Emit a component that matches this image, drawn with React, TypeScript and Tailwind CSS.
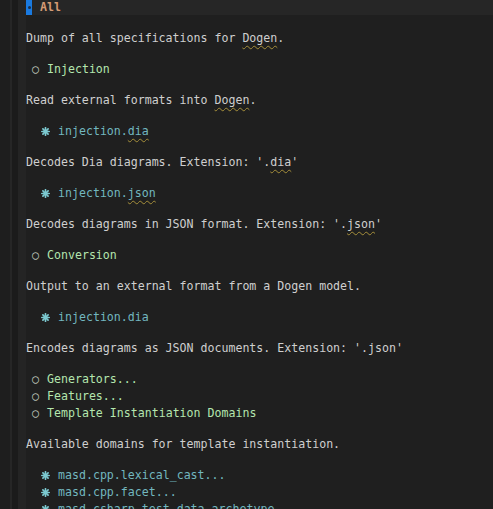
import type React from "react"

const mono = { fontFamily: '"DejaVu Sans Mono", "Liberation Mono", monospace' }

function Squiggle({ children }: { children: React.ReactNode }) {
  return (
    <span className="underline decoration-wavy decoration-[#a58e3a] decoration-1 underline-offset-[3px]">
      {children}
    </span>
  )
}

function Para({ children }: { children: React.ReactNode }) {
  return <div className="h-[17px] leading-[17px] whitespace-pre text-[#cfcfcf]">{children}</div>
}

function Heading({ children }: { children: React.ReactNode }) {
  return (
    <div className="flex h-[17px] items-center leading-[17px] whitespace-pre">
      <span className="w-[21px] pl-[6px] text-[12px] text-[#b9c0b6]">○</span>
      <span className="text-[#b4e6ae]">{children}</span>
    </div>
  )
}

// eight-pointed star bullet
function Star() {
  return (
    <svg width="9" height="9" viewBox="0 0 9 9" className="text-[#7cc9d0]">
      <g stroke="currentColor" strokeWidth="1.7" strokeLinecap="round">
        <line x1="4.5" y1="0.8" x2="4.5" y2="8.2" />
        <line x1="0.8" y1="4.5" x2="8.2" y2="4.5" />
        <line x1="1.9" y1="1.9" x2="7.1" y2="7.1" />
        <line x1="7.1" y1="1.9" x2="1.9" y2="7.1" />
      </g>
    </svg>
  )
}

function Leaf({ children }: { children: React.ReactNode }) {
  return (
    <div className="flex h-[17px] items-center leading-[17px] whitespace-pre">
      <span className="flex w-[32px] pl-[15px]">
        <Star />
      </span>
      <span className="text-[#72b7bf]">{children}</span>
    </div>
  )
}

export default function App() {
  return (
    <div className="flex h-[509px] w-[493px] overflow-hidden bg-[#1f1f1f] text-[11.6px]" style={mono}>
      <div className="w-[10px] shrink-0 bg-[#1e1e1e]" />
      <div className="w-[2px] shrink-0 bg-[#262626]" />
      <div className="w-[6px] shrink-0 bg-[#1b1b1b]" />
      <div className="w-[8px] shrink-0 bg-[#242424]" />
      <div className="flex min-w-0 flex-1 flex-col">
        <div className="flex h-[15px] shrink-0 items-center bg-[#262626]">
          <div className="flex h-[15px] w-[6px] items-center justify-center bg-[#1a7ae0]">
            <span className="h-[3px] w-[3px] rounded-full bg-[#1b2f4a]" />
          </div>
          <span className="pl-[8px] leading-[15px] font-bold text-[#d49a74]">All</span>
        </div>
        <div className="flex flex-col gap-[14px] pt-[15px]">
          <Para>
            Dump of all specifications for <Squiggle>Dogen</Squiggle>.
          </Para>
          <Heading>Injection</Heading>
          <Para>
            Read external formats into <Squiggle>Dogen</Squiggle>.
          </Para>
          <Leaf>
            injection.<Squiggle>dia</Squiggle>
          </Leaf>
          <Para>
            Decodes Dia diagrams. Extension: '.<Squiggle>dia</Squiggle>'
          </Para>
          <Leaf>
            injection.<Squiggle>json</Squiggle>
          </Leaf>
          <Para>
            Decodes diagrams in JSON format. Extension: '.<Squiggle>json</Squiggle>'
          </Para>
          <Heading>Conversion</Heading>
          <Para>Output to an external format from a Dogen model.</Para>
          <Leaf>injection.dia</Leaf>
          <Para>Encodes diagrams as JSON documents. Extension: '.json'</Para>
          <div className="flex flex-col">
            <Heading>Generators...</Heading>
            <Heading>Features...</Heading>
            <Heading>Template Instantiation Domains</Heading>
          </div>
          <Para>Available domains for template instantiation.</Para>
          <div className="flex flex-col">
            <Leaf>masd.cpp.lexical_cast...</Leaf>
            <Leaf>masd.cpp.facet...</Leaf>
            <Leaf>masd.csharp.test_data.archetype...</Leaf>
          </div>
        </div>
      </div>
    </div>
  )
}
